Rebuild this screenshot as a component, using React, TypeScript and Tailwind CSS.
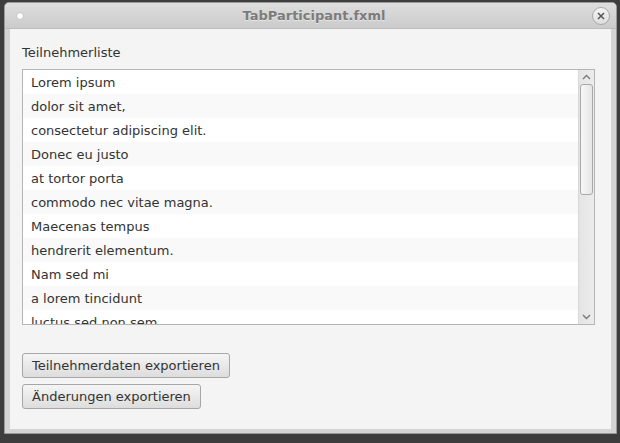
const items = [
  "Lorem ipsum",
  "dolor sit amet,",
  "consectetur adipiscing elit.",
  "Donec eu justo",
  "at tortor porta",
  "commodo nec vitae magna.",
  "Maecenas tempus",
  "hendrerit elementum.",
  "Nam sed mi",
  "a lorem tincidunt",
  "luctus sed non sem",
];

function Chevron({ up }: { up?: boolean }) {
  return (
    <svg width="9" height="6" viewBox="0 0 9 6" className="block">
      <path
        d={up ? "M1 5 L4.5 1.5 L8 5" : "M1 1 L4.5 4.5 L8 1"}
        fill="none"
        stroke="#7a7a7a"
        strokeWidth="1.4"
      />
    </svg>
  );
}

export default function App() {
  return (
    <div className="w-[620px] h-[443px] bg-[#3d3d3d] pt-[2px] pl-[4px] font-['DejaVu_Sans',sans-serif] overflow-hidden">
      <div className="w-[613px] h-[432px] flex flex-col rounded-t-[5px] border border-[#9a9a9a] bg-[#d4d4d4] overflow-hidden">
        {/* title bar */}
        <div className="h-[26px] flex items-center justify-between pl-[11px] pr-[12px] bg-gradient-to-b from-[#dedede] to-[#cbcbcb] border-b border-[#bdbdbd]">
          <div className="w-[8px] h-[8px] rounded-full bg-white border border-[#c4c4c4]" />
          <div className="pl-[12px] pt-[1px] text-[13px] font-bold text-[#7c7c7c] [text-shadow:0_1px_0_#e6e6e6]">
            TabParticipant.fxml
          </div>
          <div className="w-[18px] h-[18px] -mr-[6px] rounded-full border border-[#a9a9a9] bg-gradient-to-b from-[#f4f4f4] to-[#dedede] flex items-center justify-center">
            <svg width="8" height="8" viewBox="0 0 8 8">
              <path d="M1 1 L7 7 M7 1 L1 7" stroke="#555" strokeWidth="1.5" />
            </svg>
          </div>
        </div>

        {/* content */}
        <div className="mx-[5px] w-[601px] h-[400px] bg-[#f4f4f4] pt-[15px] pl-[12px] pr-[16px] text-[13px] text-[#333]">
          <div className="h-[16px] leading-[18px]">Teilnehmerliste</div>
          <div className="mt-[9px] h-[256px] border border-[#b5b5b5] bg-white flex">
            <div className="flex-1 overflow-hidden">
              {items.map((t, i) => (
                <div
                  key={t}
                  className={`h-[24px] leading-[25px] pl-[8px] whitespace-nowrap ${
                    i % 2 === 1 ? "bg-[#f9f9f9]" : "bg-white"
                  }`}
                >
                  {t}
                </div>
              ))}
            </div>
            <div className="w-[16px] border-l border-[#d8d8d8] bg-gradient-to-r from-[#e4e4e4] to-[#ececec] flex flex-col items-center">
              <div className="h-[14px] flex items-center justify-center">
                <Chevron up />
              </div>
              <div className="w-[13px] h-[111px] rounded-[3px] border border-[#a9a9a9] bg-gradient-to-r from-[#f7f7f7] to-[#e6e6e6]" />
              <div className="flex-1" />
              <div className="h-[14px] flex items-center justify-center">
                <Chevron />
              </div>
            </div>
          </div>
          <div className="mt-[28px] flex flex-col items-start gap-[6px]">
            <button className="h-[25px] px-[9px] rounded-[3px] border border-[#a6a6a6] bg-gradient-to-b from-[#f5f5f5] to-[#dddddd] text-[#333] leading-[24px]">
              Teilnehmerdaten exportieren
            </button>
            <button className="h-[25px] px-[9px] rounded-[3px] border border-[#a6a6a6] bg-gradient-to-b from-[#f5f5f5] to-[#dddddd] text-[#333] leading-[24px]">
              Änderungen exportieren
            </button>
          </div>
        </div>
      </div>
    </div>
  );
}
